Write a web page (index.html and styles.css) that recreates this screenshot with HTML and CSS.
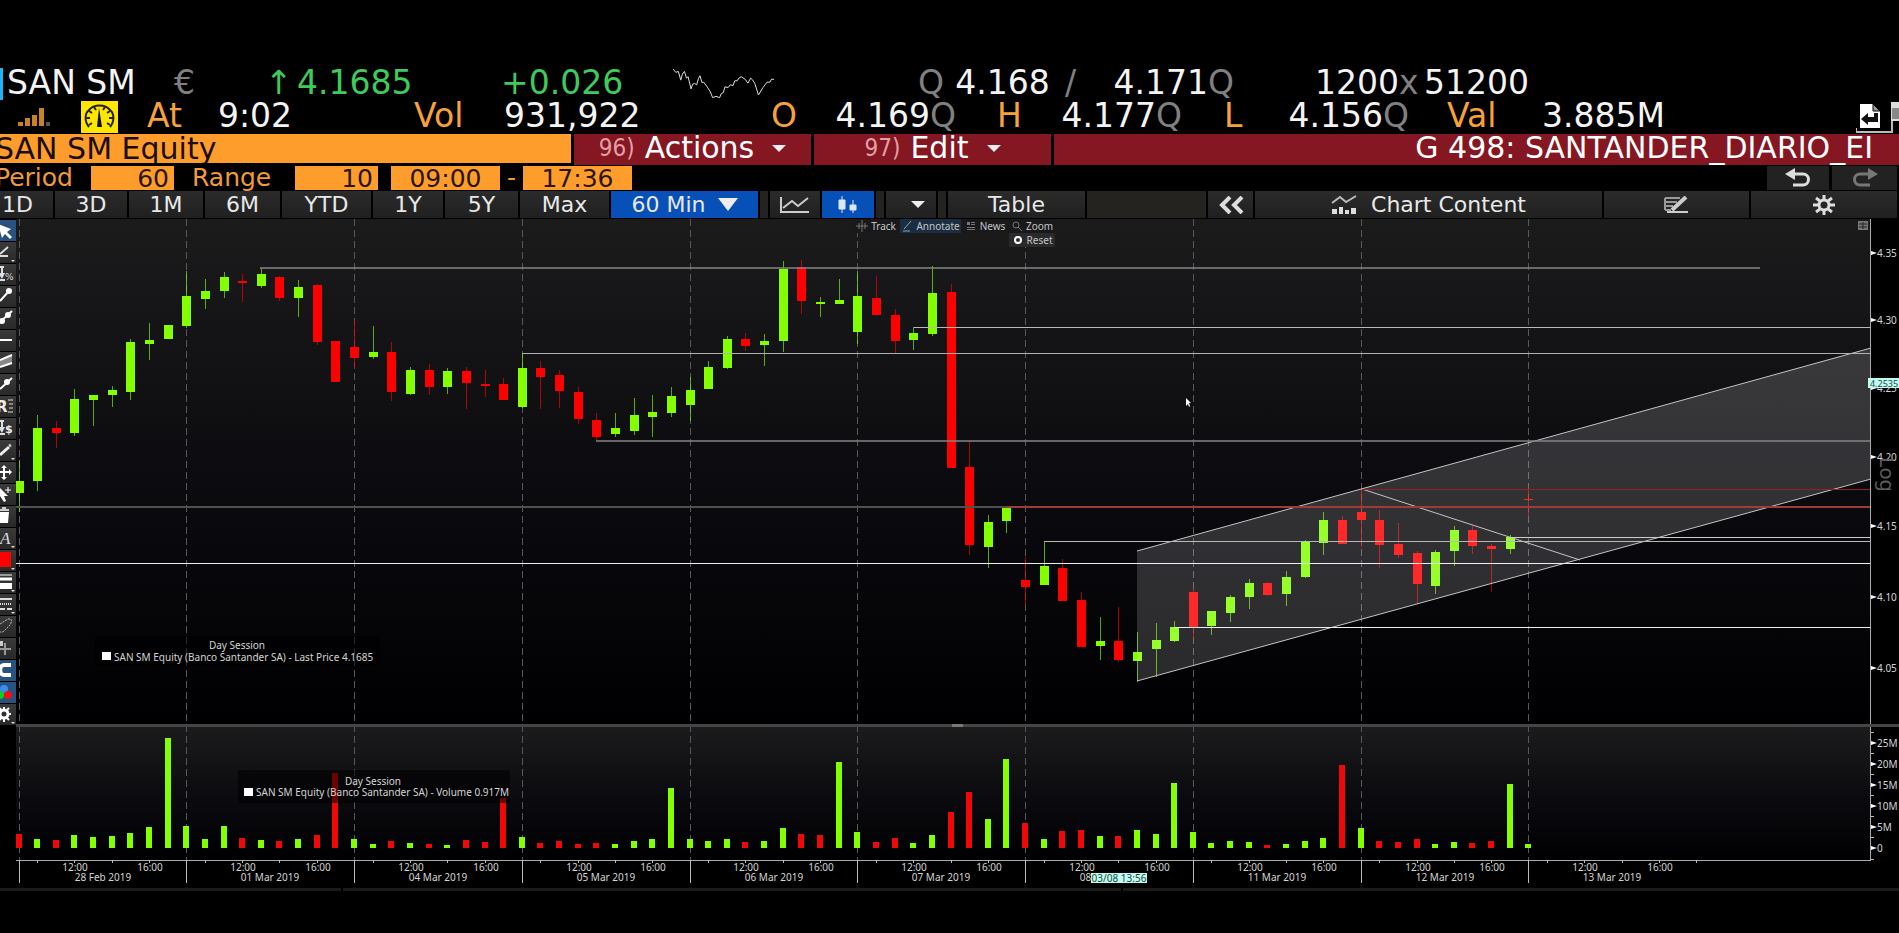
FILE: index.html
```html
<!DOCTYPE html>
<html lang="en">
<head>
  <meta charset="UTF-8">
  <title>SAN SM Equity</title>
  <link rel="stylesheet" href="styles.css">
</head>
<body>
  <header>
    <div class="quote quote-top">
      <span class="mark"></span>
      <span>SAN SM</span>
      <span class="dim">€</span>
      <span class="up">↑</span>
      <span class="up">4.1685</span>
      <span class="up">+0.026</span>
      <svg class="spark" viewBox="105 42 247 92" preserveAspectRatio="none"><polyline points="105,45 112,55 118,52 124,78 128,60 133,52 138,72 142,68 149,104 153,90 158,88 163,92 167,74 171,65 176,86 180,84 188,97 196,112 202,130 210,126 219,130 223,118 228,115 232,98 240,100 245,92 252,94 256,80 262,80 266,72 272,68 282,76 288,87 295,72 300,78 305,88 314,122 325,100 335,84 342,84 346,75 352,76"/></svg>
      <span class="dim">Q</span>
      <span class="num bid">4.168</span>
      <span class="dim">/</span>
      <span class="num">4.171</span>
      <span class="dim">Q</span>
      <span class="num">1200</span>
      <span class="dim">x</span>
      <span>51200</span>
    </div>
    <div class="quote quote-bottom">
      <svg class="signal" width="34" height="20" viewBox="0 0 34 20"><g fill="#c98222"><path d="M0 15h5v4H0zM7 11h5v8H7zM14 8h5v11h-5zM21 1h5v18h-5z"/></g><path d="M28 15h4v4h-4z" fill="#555"/></svg>
      <svg width="37" height="32" viewBox="0 0 37 32"><path fill="#ffe600" d="M0 0h37v32H0z"/><path d="M8 26C3 20 4 12 8 9 13 3 24 3 29 9c4 3 5 11 0 17" fill="none" stroke="#222" stroke-width="2"/><path d="M5 17h4M28 17h4M8 10l3 2M29 10l-3 2M13 6l2 3M24 6l-2 3M8 24l3-2M29 24l-3-2" stroke="#222" stroke-width="2"/><path d="M18 7l3 19h-5z" fill="#111"/></svg>
      <span class="tag">At</span>
      <span>9:02</span>
      <span class="tag">Vol</span>
      <span>931,922</span>
      <span class="tag">O</span>
      <span class="num">4.169</span>
      <span class="dim">Q</span>
      <span class="tag">H</span>
      <span class="num">4.177</span>
      <span class="dim">Q</span>
      <span class="tag">L</span>
      <span class="num">4.156</span>
      <span class="dim">Q</span>
      <span class="tag">Val</span>
      <span>3.885M</span>
      <svg width="43" height="32" viewBox="0 0 43 32"><path d="M4 3h13l7 7v17H4z" fill="#fff"/><path d="M17 3l7 7h-7z" fill="#999" stroke="#000"/><path d="M5 18l7-6v4h6v-4h4v9H12v3z" fill="#111"/><path d="M0 27v4h36V17h3" fill="none" stroke="#bbb" stroke-width="2"/><path d="M35 1h8v19h-8z" fill="#ddd"/><path d="M36 7h7v11h-7z" fill="#888"/></svg>
    </div>
    <div class="command">
      <input class="security" type="text" value="SAN SM Equity" aria-label="Security">
      <button class="menu"><small>96)</small>Actions<i class="caret"></i></button>
      <button class="menu"><small>97)</small>Edit<i class="caret"></i></button>
      <div class="chart-name">G 498: SANTANDER_DIARIO_EI</div>
    </div>
    <div class="period">
      <label for="period">Period</label>
      <input id="period" type="text" value="60">
      <label for="range">Range</label>
      <input id="range" type="text" value="10">
      <input id="from" class="time" type="text" value="09:00" aria-label="From">
      <span>-</span>
      <input id="to" class="time" type="text" value="17:36" aria-label="To">
      <button class="undo" aria-label="Undo"><svg width="28" height="20" viewBox="0 0 28 20"><path d="M7 6h12a5 5 0 0 1 0 11H9" fill="none" stroke="#ddd" stroke-width="3"/><path d="M1 6l10-6v12z" fill="#ddd"/></svg></button>
      <button aria-label="Redo"><svg width="28" height="20" viewBox="0 0 28 20"><path d="M21 6H9a5 5 0 0 0 0 11h10" fill="none" stroke="#777" stroke-width="3"/><path d="M27 6L17 0v12z" fill="#777"/></svg></button>
    </div>
    <nav class="tabs">
      <button>1D</button>
      <button>3D</button>
      <button>1M</button>
      <button>6M</button>
      <button>YTD</button>
      <button>1Y</button>
      <button>5Y</button>
      <button>Max</button>
      <button class="on">60 Min<i class="caret big"></i></button>
      <span class="gap"></span>
      <button aria-label="Line"><svg width="30" height="18" viewBox="0 0 30 18" fill="none" stroke="#ccc" stroke-width="2"><path d="M1 1v15h28M3 12l9-7 6 5 10-8"/></svg></button>
      <button class="on" aria-label="Candles"><svg width="20" height="20" viewBox="0 0 20 20" fill="#dde6f5" stroke="#dde6f5"><path d="M4 1v17M15 5v13M1 5h6v9H1zM12 10h6v5h-6z"/></svg></button>
      <span class="gap"></span>
      <button class="more" aria-label="More types"><i class="caret"></i></button>
      <span class="gap"></span>
      <button>Table</button>
      <span class="blank"></span>
      <button aria-label="Collapse"><svg width="26" height="18" viewBox="0 0 26 18" fill="none" stroke="#ddd" stroke-width="4"><path d="M12 1L4 9l8 8M24 1l-8 8 8 8"/></svg></button>
      <button class="content"><svg width="26" height="20" viewBox="0 0 26 20"><path d="M1 8l8-6 6 5 10-6" fill="none" stroke="#bbb" stroke-width="2"/><path d="M1 19v-5h5v5zM8 19v-7h4v7zM14 19v-4h4v4zM20 19v-6h5v6z" fill="#ddd"/></svg>Chart Content</button>
      <button aria-label="Edit notes"><svg width="26" height="18" viewBox="0 0 26 18" fill="none" stroke="#ccc"><path d="M1 2h15M1 6h12M1 10h8M1 14h6M1 2v12" stroke="#999" stroke-width="2"/><path d="M22 1L8 14" stroke-width="4"/><path d="M3 16h21" stroke-width="2"/></svg></button>
      <button aria-label="Settings"><svg width="26" height="20" viewBox="-13 -10 26 20" stroke="#ddd" fill="none"><circle r="5" stroke-width="3"/><path d="M0-10v5M0 5v5M-11 0h5M6 0h5M-8-7l4 3M8-7L4-4M-8 7l4-3M8 7L4 4" stroke-width="3"/></svg></button>
    </nav>
  </header>

  <main>
    <aside class="tools" id="tools"></aside>
    <div class="chart">
      <svg id="chart" viewBox="16 219 1883 667"></svg>
      <div class="modes">
        <button><svg width="12" height="12" viewBox="0 0 12 12" stroke="#777"><path d="M6 0v12M0 6h12M3 3v6M9 3v6"/></svg>Track</button>
        <button class="active"><svg width="12" height="12" viewBox="0 0 12 12" stroke="#8aa" fill="none"><path d="M10 1L3 9M2 11h7"/></svg>Annotate</button>
        <button><svg width="12" height="12" viewBox="0 0 12 12" fill="#777"><path d="M2 2h3v3H2zM6 2h4v1H6zM6 4h4v1H6zM2 7h8v1H2zM2 9h8v1H2z"/></svg>News</button>
        <button><svg width="12" height="12" viewBox="0 0 12 12" stroke="#777" fill="none"><circle cx="5" cy="5" r="3"/><path d="M7 7l4 4"/></svg>Zoom</button>
        <button class="reset"><svg width="12" height="12" viewBox="0 0 12 12" stroke="#fff" stroke-width="2" fill="none"><circle cx="6" cy="6" r="3"/></svg>Reset</button>
      </div>
    </div>
  </main>
  <footer><span></span><span></span><span></span></footer>
  <script src="chart.js"></script>
</body>
</html>
```

FILE: styles.css
```css
* {
  box-sizing: border-box;
}
body {
  margin: 0;
  padding-top: 67px;
  min-height: 100vh;
  background: #000;
  color: #f4f4f4;
  font-family: "DejaVu Sans", Verdana, sans-serif;
  overflow-x: hidden;
}
button, input {
  font: inherit;
  color: inherit;
  border: 0;
  border-radius: 0;
  margin: 0;
  padding: 0;
  min-width: 0;
}
button {
  display: flex;
  align-items: center;
  justify-content: center;
  white-space: nowrap;
  cursor: pointer;
}

/* quote lines */
.quote {
  display: grid;
  align-items: center;
  font-size: 33px;
  line-height: 30px;
  white-space: nowrap;
}
.quote > * {
  min-width: 0;
}
.quote > span {
  padding-bottom: 2px;
}
.quote-top {
  height: 33px;
  grid-template-columns: 7fr 167fr 91fr 32fr 204fr 172fr 245fr 22fr 125fr 22fr 121fr 95fr 96fr 25fr 475fr;
}
.quote-bottom {
  height: 34px;
  grid-template-columns: 81fr 66fr 71fr 196fr 90fr 267fr 39fr 120fr 67fr 39fr 120fr 68fr 37fr 122fr 64fr 95fr 314fr 43fr;
}
.num {
  text-align: right;
}
.bid {
  text-align: center;
}
.mark {
  width: 3px;
  height: 32px;
  background: #1fb4f5;
}
.dim {
  color: #808080;
}
.up {
  color: #3ecb5b;
}
.tag {
  color: #f7a13a;
}
.spark {
  width: 101px;
  height: 31px;
}
.spark polyline {
  fill: none;
  stroke: #ddd;
  vector-effect: non-scaling-stroke;
}
.signal {
  margin-left: 18px;
}

/* command line */
.command {
  display: grid;
  grid-template-columns: 571fr 237fr 237fr 845fr;
  gap: 3px;
  height: 31px;
  font-size: 30px;
  line-height: 28px;
}
.security {
  height: 29px;
  background: #ff9d2c;
  color: #1a0d05;
  text-indent: -5px;
}
.menu, .chart-name {
  padding-bottom: 3px;
  background: #841722;
  color: #fff;
}
.menu small {
  font: 24px "DejaVu Sans Condensed", "DejaVu Sans", sans-serif;
  color: #e2a0a6;
  margin-right: 10px;
}
.chart-name {
  padding-right: 26px;
  text-align: right;
  white-space: nowrap;
}
.caret {
  margin-left: 18px;
  border: 7px solid transparent;
  border-top-color: #eee;
  border-bottom: 0;
}
.caret.big {
  margin-left: 12px;
  border-width: 13px 10px 0;
}

/* period line */
.period {
  display: flex;
  align-items: center;
  height: 26px;
  padding-right: 2px;
  font-size: 25px;
  line-height: 24px;
  color: #f09a3c;
  overflow: hidden;
}
.period label[for="period"] {
  width: 96px;
  margin-left: -5px;
}
.period label[for="range"] {
  width: 103px;
  margin-left: 18px;
}
.period input {
  width: 83px;
  height: 24px;
  padding-right: 5px;
  background: #ff9d2c;
  color: #2a1503;
  text-align: right;
}
.period .time {
  width: 109px;
  margin-left: 13px;
  padding: 0;
  text-align: center;
}
.period span {
  width: 23px;
  text-align: center;
}
.period span + .time {
  margin-left: 0;
}
.period button {
  width: 65px;
  height: 24px;
  margin-left: 3px;
  background: #222;
}
.period .undo {
  width: 62px;
  margin-left: auto;
}

/* tabs */
.tabs {
  display: grid;
  grid-template-columns: 53fr 72fr 74fr 75fr 89fr 70fr 73fr 89fr 147fr 8fr 50fr 52fr 8fr 50fr 8fr 137fr 119fr 45fr 347fr 145fr 146fr;
  gap: 2px;
  height: 28px;
  padding-right: 2px;
  font-size: 22px;
}
.tabs button {
  height: 27px;
  background: linear-gradient(#2b2b2c, #202021);
  color: #e8e8e8;
}
.tabs button:first-child {
  justify-content: flex-start;
  padding-left: 2px;
}
.tabs .on {
  background: #0650b8;
}
.tabs .more .caret {
  margin-left: 14px;
}
.tabs .content {
  gap: 14px;
}
.gap, .blank {
  height: 27px;
  background: #24231f;
}

/* chart */
main {
  display: flex;
  align-items: flex-start;
}
.tools {
  width: 16px;
  flex: none;
  padding-top: 1px;
}
.tools button {
  width: 16px;
  height: 21px;
  margin-bottom: 1px;
  background: linear-gradient(#3a3a3b, #29292a);
  overflow: hidden;
}
.tools .on {
  background: #28527f;
}
.chart {
  position: relative;
  flex: 1;
  min-width: 0;
}
#chart {
  display: block;
  width: 100%;
  font-family: "Noto Sans", sans-serif;
  font-size: 10px;
}
.label {
  fill: #d4d4d4;
}
.middle {
  text-anchor: middle;
}
.log {
  fill: #5c5c5c;
  font-size: 20px;
}
.flag {
  fill: #c4fbf0;
}
.flag-text {
  fill: #134d4a;
}
.legend-box {
  fill: #000;
  fill-opacity: 0.55;
}
.day {
  stroke: #58585a;
  stroke-dasharray: 7 4;
}
.modes {
  position: absolute;
  top: 0;
  left: 44.4%;
  display: grid;
  grid-template-columns: 48px 61px 48px 46px;
  font: 10px "Noto Sans", sans-serif;
}
.modes button {
  height: 14px;
  gap: 3px;
  background: #19191b;
  color: #c4c4c4;
}
.modes .active {
  background: #1b2d42;
}
.modes .reset {
  grid-column: 4;
  background: #2a2a2b;
}
footer {
  display: grid;
  grid-template-columns: 341fr 778fr 776fr;
  gap: 2px;
  margin-top: 2px;
}
footer span {
  height: 3px;
  background: #1a1a1a;
}
```

FILE: chart.js
```js
const UP = "#83ff00", DOWN = "#ff0000";
const FIRST = 19, STEP = 18.64;
const LEFT = 16, RIGHT = 1871;
const barX = i => Math.floor(FIRST + i * STEP);

// direction, high, body top, body bottom, low
const candles = [
  "u 460 481 493 512", "u 415 428 481 491", "d 421 428 433 448", "u 389 399 433 436", "u 395 395 400 426",
  "u 386 390 395 407", "u 339 342 392 400", "u 323 340 344 360", "u 325 325 339 339",
  "u 271 296 326 328", "u 279 291 299 309", "u 272 277 291 298", "d 274 281 283 302", "u 268 274 286 288",
  "d 276 277 298 301", "u 280 287 298 317", "d 284 285 342 345", "d 316 316 357 357",
  "d 320 347 358 369", "u 326 352 357 359", "d 342 352 392 401", "u 367 370 394 395", "d 364 370 387 395",
  "u 368 371 387 394", "d 367 371 383 409", "d 370 384 386 397", "d 378 384 400 400",
  "u 354 368 407 408", "d 361 368 377 409", "d 370 375 391 408", "d 387 392 419 424", "d 413 420 437 440",
  "u 413 428 434 437", "u 398 415 431 435", "u 395 412 417 437", "u 387 396 413 417",
  "u 377 390 405 421", "u 361 367 389 389", "u 336 339 368 369", "d 333 339 346 351", "u 334 341 345 366",
  "u 261 269 341 352", "d 260 267 301 314", "u 297 302 304 317", "u 279 300 304 304",
  "u 271 296 332 344", "d 276 298 315 316", "d 309 315 341 354", "u 327 333 340 350", "u 266 293 334 336",
  "d 284 292 468 468", "d 441 467 545 555", "u 515 522 547 568", "u 508 508 521 533",
  "d 557 580 587 606", "u 542 566 585 585", "d 559 568 601 601", "d 592 600 647 647", "u 617 641 646 660",
  "d 607 641 660 662", "u 632 652 661 682", "u 623 640 649 677", "u 621 627 641 642",
  "d 588 592 628 639", "u 611 611 626 635", "u 595 597 613 622", "u 579 583 597 609", "d 582 583 595 596",
  "u 571 577 594 606", "u 540 542 577 578", "u 512 520 543 555", "d 516 520 544 544",
  "d 489 512 520 547", "d 510 520 545 568", "d 523 544 555 558", "d 551 553 584 604", "u 550 552 586 594",
  "u 526 530 551 566", "d 526 530 546 554", "d 544 546 549 592", "u 535 537 549 554",
  "d 489 499 500 517"
];
candles[17] = "d 341 341 382 382";

// bar height with its direction
const volumes = ("d14 u9 d8 u13 u11 u12 u15 u21 u110 u22 u9 u22 d10 u8 d7 u9 d13 d75 " +
  "u9 u4 d7 u5 d4 u3 d8 d6 d50 u11 d5 d7 d4 d5 u4 u7 u9 u60 " +
  "u9 u7 u9 d6 u7 u20 d14 d13 u86 u16 d6 d10 u5 u13 d36 d56 u29 u89 " +
  "d25 u9 d17 d18 u12 d12 u18 u14 u65 u16 u5 u7 u6 d3 u4 u7 u10 d83 " +
  "u20 d7 d6 d9 u4 u6 d5 d7 u64 u4").split(" ");

const days = ["28 Feb 2019", "01 Mar 2019", "04 Mar 2019", "05 Mar 2019", "06 Mar 2019",
  "07 Mar 2019", "08 Mar 2019", "11 Mar 2019", "12 Mar 2019", "13 Mar 2019"];

const out = [];
const rect = (x, y, w, h, attrs) => out.push(`<rect x="${x}" y="${y}" width="${w}" height="${h}" ${attrs}/>`);
const line = (x1, y1, x2, y2, attrs) => out.push(`<line x1="${x1}" y1="${y1}" x2="${x2}" y2="${y2}" ${attrs}/>`);
const text = (x, y, s, cls, attrs = "") => out.push(`<text x="${x}" y="${y}" class="${cls}" ${attrs}>${s}</text>`);

// panes
out.push(`<defs><linearGradient id="pane" x1="0" y1="0" x2="0" y2="1">
  <stop offset="0" stop-color="#1b1b1c"/><stop offset="0.5" stop-color="#0c0c10"/><stop offset="1" stop-color="#000003"/>
</linearGradient></defs>`);
rect(LEFT, 219, RIGHT - LEFT, 505, 'fill="url(#pane)"');
rect(LEFT, 727, RIGHT - LEFT, 133, 'fill="url(#pane)"');

days.forEach((d, i) => {
  const x = barX(i * 9) + 0.5;
  line(x, 219, x, 860, 'class="day"');
});

// candles
candles.forEach((row, i) => {
  const [dir, high, top, bottom, low] = row.split(" ");
  const color = dir === "u" ? UP : DOWN;
  const x = barX(i);
  const left = Math.max(x - 4, LEFT);
  line(x + 0.5, high, x + 0.5, low, `stroke="${color}" stroke-opacity="0.65"`);
  rect(left, top, x + 5 - left, Math.max(bottom - top, 1), `fill="${color}"`);
});

// annotations
out.push('<polygon points="1137,551 1871,348 1871,479 1137,681" fill="#fff" fill-opacity="0.16"/>');
out.push('<path d="M1137 551L1871 348M1137 681L1871 479M1362 489L1580 560" fill="none" stroke="#c4c4c4"/>');
line(260, 268, 1760, 268, 'stroke="#858585" stroke-width="1.5"');
line(914, 327.5, RIGHT, 327.5, 'stroke="#b8b8b8"');
line(522, 353.5, RIGHT, 353.5, 'stroke="#b0b0b0"');
line(596, 441, RIGHT, 441, 'stroke="#858585" stroke-width="1.5"');
line(LEFT, 507, 1007, 507, 'stroke="#50504a" stroke-width="2"');
line(1007, 507, RIGHT, 507, 'stroke="#a03c38" stroke-width="2"');
line(1362, 489.5, RIGHT, 489.5, 'stroke="#8e2226"');
line(1512, 537.5, RIGHT, 537.5, 'stroke="#ccc"');
line(1044, 541.5, RIGHT, 541.5, 'stroke="#b8b8b8"');
line(LEFT, 563.5, RIGHT, 563.5, 'stroke="#eee"');
line(1175, 627.5, RIGHT, 627.5, 'stroke="#eee"');

// volume
volumes.forEach((v, i) => {
  const h = +v.slice(1);
  const left = Math.max(barX(i) - 3, LEFT);
  rect(left, 848 - h, 6, h, `fill="${v[0] === "u" ? UP : "#f00808"}"`);
});

// legends
rect(95, 636, 285, 30, 'class="legend-box"');
text(237, 649, "Day Session", "label middle");
rect(102, 652, 9, 8, 'fill="#fff"');
text(114, 661, "SAN SM Equity (Banco Santander SA) - Last Price 4.1685", "label");
rect(238, 770, 272, 33, 'class="legend-box"');
text(373, 785, "Day Session", "label middle");
rect(244, 788, 9, 8, 'fill="#fff"');
text(256, 796, "SAN SM Equity (Banco Santander SA) - Volume 0.917M", "label");

// axes
line(RIGHT - 0.5, 219, RIGHT - 0.5, 860, 'stroke="#aaa"');
const priceTicks = [[4.35, 253], [4.30, 320], [4.25, 388], [4.20, 457], [4.15, 526], [4.10, 597], [4.05, 668]];
priceTicks.forEach(([p, y]) => {
  out.push(`<path d="M1871 ${y - 2}l6 2-6 2z" fill="#fff"/>`);
  text(1877, y + 4, p.toFixed(2), "label");
});
text(1880, 457, "Log", "log", 'transform="rotate(90 1880 457)"');
["25M", "20M", "15M", "10M", "5M", "0"].forEach((s, i) => {
  const y = 743 + i * 21;
  line(RIGHT, y - 10.5, RIGHT + 3, y - 10.5, 'stroke="#bbb"');
  out.push(`<path d="M1871 ${y - 2}l6 2-6 2z" fill="#fff"/>`);
  text(1877, y + 4, s, "label");
});
line(RIGHT, 859.5, RIGHT + 3, 859.5, 'stroke="#bbb"');

rect(LEFT, 724, 1883, 3, 'fill="#454547"');
rect(952, 724, 11, 3, 'fill="#777"');
line(LEFT, 860.5, RIGHT, 860.5, 'stroke="#a8aca8"');
days.forEach((d, i) => {
  const x = barX(i * 9);
  line(x + 0.5, 860, x + 0.5, 883, 'stroke="#bbb"');
  [1, 3, 5, 7].concat(i === 9 ? [9] : []).forEach(n => {
    const t = barX(i * 9 + n) + 0.5;
    line(t, 860, t, 863, 'stroke="#bbb"');
  });
  text(barX(i * 9 + 3) + 1, 871, "12:00", "label middle");
  text(barX(i * 9 + 7) + 1, 871, "16:00", "label middle");
  text(x + 84, 881, d, "label middle");
});

// crosshair read-outs
rect(1868, 378, 31, 10, 'class="flag"');
text(1884, 387, "4.2535", "flag-text middle", 'font-size="9"');
rect(1091, 873, 56, 10, 'class="flag"');
text(1119, 882, "03/08 13:56", "flag-text middle");

rect(1858, 221, 10, 9, 'fill="#777"');
out.push('<path d="M1859 224h8M1859 227h8M1863 222v7" stroke="#222"/>');
out.push('<path d="M1186 398v8l2-2 1 3 1-1-1-3h2z" fill="#fff"/>');
document.getElementById("chart").innerHTML = out.join("");

// drawing tools: name, icon, state
const more = '<path d="M11 18h4l-2 2z" fill="#ddd"/>';
const measure = '<path d="M0 3h4M2 3v7M0 16h5" stroke="#ddd" stroke-width="2"/><path d="M-2 9h7l-3 6z" fill="#ddd"/>';
const tools = [
  ["Select", '<path d="M-2 4L11 9 7 12l5 5-2 2-5-5-3 4z" fill="#fff"/>', "on"],
  ["Line", '<path d="M0 12L8 5M0 14h8" stroke="#ddd" stroke-width="2"/>' + more],
  ["Percent", measure + '<text x="5" y="16" font-size="9" fill="#ddd">%</text>'],
  ["Trend", '<path d="M0 15L9 5" stroke="#fff" stroke-width="2"/><circle cx="9" cy="5" r="3" fill="#fff"/>'],
  ["Segments", '<path d="M0 14L12 3" stroke="#fff" stroke-width="2"/><circle cx="2" cy="13" r="3" fill="#fff"/><circle cx="8" cy="7" r="3" fill="#fff"/>'],
  ["Horizontal", '<path d="M0 10h12" stroke="#fff" stroke-width="2"/>'],
  ["Channel", '<path d="M0 8l12-5v8L0 15z" fill="#888"/><path d="M0 8l12-5M0 15l12-4" stroke="#fff" stroke-width="2"/>'],
  ["Ray", '<path d="M0 15L12 4" stroke="#fff" stroke-width="2"/><circle cx="7" cy="8" r="3" fill="#fff"/>'],
  ["Regression", '<text x="-4" y="16" font-size="15" font-weight="bold" fill="#eee">R</text><path d="M8 4h5M9 8h4M9 12h4M8 16h5" stroke="#ddd"/>'],
  ["Price", measure + '<text x="5" y="15" font-size="11" font-weight="bold" fill="#eee">$</text>'],
  ["Pencil", '<path d="M0 15L9 7" stroke="#eee" stroke-width="3"/><path d="M9 6l2-1" stroke="#ccc" stroke-width="3"/>' + more],
  ["Move", '<path d="M4 4v13M0 10h11" stroke="#fff" stroke-width="2"/><path d="M1 6l3-3 3 3zM1 15l3 3 3-3zM9 7l3 3-3 3z" fill="#fff"/>'],
  ["Add point", '<path d="M0 4l8 8H4l2 5-2 1-4-6z" fill="#fff"/><path d="M8 3v6M5 6h6" stroke="#fff"/>'],
  ["Delete", '<path d="M0 6h9L8 17H0z" fill="#fff"/><path d="M0 4h9M2 2h4" stroke="#ccc" stroke-width="2"/>'],
  ["Text", '<text x="0" y="16" font-size="17" font-style="italic" font-family="Liberation Serif" fill="#ddd">A</text>' + more],
  ["Color", '<path d="M0 2h11v15H0z" fill="#f00"/>' + more],
  ["Weight", '<path d="M0 3h12" stroke="#fff"/><path d="M0 7h12" stroke="#fff" stroke-width="3"/><path d="M0 14h12" stroke="#fff" stroke-width="6"/>' + more],
  ["Dash", '<path d="M0 5h12" stroke="#ddd" stroke-width="2"/><path d="M0 10h12" stroke="#ddd" stroke-width="2" stroke-dasharray="1 1"/><path d="M0 15h12" stroke="#ddd" stroke-width="2" stroke-dasharray="5 2"/>' + more],
  ["Lasso", '<path d="M0 8L8 3c5-1 4 4 1 7l-6 6H0" fill="none" stroke="#bbb" stroke-dasharray="2 1"/>'],
  ["Lock", '<path d="M5 5v12M0 11h11" stroke="#999" stroke-width="2"/><path d="M0 3h3v5H0z" fill="#ccc"/>'],
  ["Magnet", '<path d="M11 5H4C-1 5-1 15 4 15h7" fill="none" stroke="#fff" stroke-width="4"/>', "on"],
  ["Colors", '<circle cx="4" cy="7" r="4" fill="#3b8df0"/><circle cx="0" cy="13" r="4" fill="#1c2"/><circle cx="8" cy="13" r="4" fill="#e11"/>', "on"],
  ["Options", '<circle cx="4" cy="10" r="4" fill="none" stroke="#fff" stroke-width="3"/><path d="M4 3v3M4 14v4M8 10h3M7 6l2-2M7 14l2 2M1 6L0 4M1 14l-1 2" stroke="#fff" stroke-width="2"/>' + more]
];
document.getElementById("tools").innerHTML = tools.map(([name, icon, state]) =>
  `<button class="${state || ""}" aria-label="${name}"><svg width="16" height="21" viewBox="0 0 16 21">${icon}</svg></button>`).join("");
```
